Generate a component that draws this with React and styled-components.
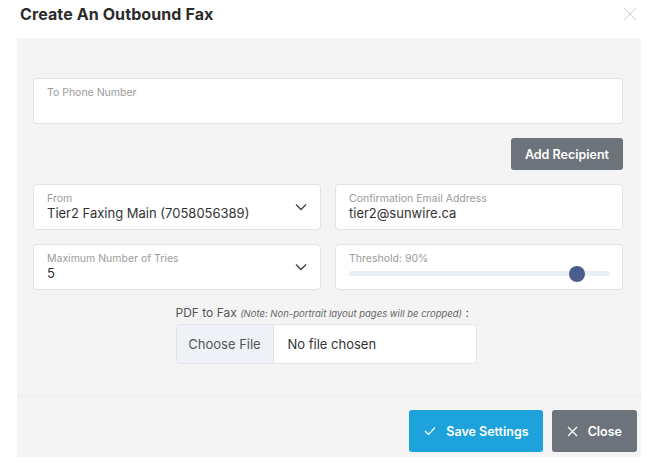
import React from "react";
import styled, { createGlobalStyle } from "styled-components";

const Global = createGlobalStyle`
  html, body { margin: 0; padding: 0; background: #fff; }
  body { font-family: Inter, "Noto Sans", sans-serif; color: #333; }
  * { box-sizing: border-box; }
`;

const Modal = styled.div`
  width: 661px;
  height: 463px;
  background: #fff;
  display: flex;
  flex-direction: column;
`;

const Header = styled.div`
  height: 38px;
  flex: none;
  display: flex;
  align-items: flex-start;
  justify-content: space-between;
  padding: 4px 24px 0 20px;
`;

const Title = styled.h1`
  margin: 0;
  font-size: 16px;
  font-weight: 700;
  color: #2b2b2b;
  line-height: 20px;
  letter-spacing: 0.1px;
`;

const CloseX = styled.button`
  border: 0;
  background: none;
  padding: 0;
  margin-top: 3px;
  width: 14px;
  height: 14px;
  display: flex;
`;

const Sheet = styled.div`
  margin: 0 20px 6px 17px;
  background: #f4f4f4;
  flex: 1;
  display: flex;
  flex-direction: column;
`;

const Body = styled.div`
  padding: 40px 18px 0 16px;
  height: 359px;
  flex: none;
  display: flex;
  flex-direction: column;
  border-bottom: 1px solid #ececec;
`;

const Box = styled.div`
  background: #fff;
  border: 1px solid #e3e3e3;
  border-radius: 4px;
  height: 46px;
  padding: 7px 14px 0 13px;
  position: relative;
  display: flex;
  flex-direction: column;
`;

const Label = styled.div`
  font-size: 10.5px;
  color: #9b9b9b;
  line-height: 13px;
`;

const Value = styled.div`
  font-size: 13px;
  color: #333;
  line-height: 17px;
`;

const ActionRow = styled.div`
  display: flex;
  justify-content: flex-end;
  margin: 14px 0;
`;

const GreyButton = styled.button`
  background: #6c737a;
  color: #fff;
  border: 0;
  border-radius: 3px;
  font-family: inherit;
  font-weight: 600;
  font-size: 12.5px;
  height: 32px;
  padding: 0 14px;
`;

const Grid = styled.div`
  display: grid;
  grid-template-columns: 1fr 1fr;
  column-gap: 14px;
  row-gap: 14px;
`;

const Chevron = styled.svg`
  position: absolute;
  right: 13px;
  top: 18px;
`;

const Track = styled.div`
  margin-top: 6px;
  height: 5px;
  border-radius: 3px;
  background: #eaeff5;
  position: relative;
  margin-right: -2px;
`;

const Thumb = styled.div`
  position: absolute;
  top: 50%;
  width: 16px;
  height: 16px;
  margin: -8px 0 0 -8px;
  border-radius: 50%;
  background: #4a5d8c;
`;

const FileSection = styled.div`
  display: flex;
  flex-direction: column;
  align-items: stretch;
  align-self: center;
  margin-top: 15px;
  margin-left: -4px;
`;

const FileLabel = styled.div`
  font-size: 12px;
  color: #555;
  line-height: 15px;
  margin-bottom: 3px;
  white-space: nowrap;
  em { font-size: 9.5px; color: #666; }
`;

const FileInput = styled.div`
  width: 301px;
  height: 40px;
  display: flex;
  border: 1px solid #e3e3e3;
  border-radius: 4px;
  overflow: hidden;
  background: #fff;
`;

const FileButton = styled.div`
  width: 97px;
  background: #eef2f7;
  border-right: 1px solid #e3e3e3;
  display: flex;
  align-items: center;
  justify-content: center;
  font-size: 13px;
  color: #555;
`;

const FileName = styled.div`
  display: flex;
  align-items: center;
  padding-left: 14px;
  font-size: 13px;
  color: #333;
`;

const Footer = styled.div`
  display: flex;
  justify-content: flex-end;
  gap: 9px;
  padding: 13px 4px 0 0;
`;

const FooterButton = styled.button`
  height: 42px;
  border: 0;
  border-radius: 3px;
  background: ${(p) => (p.$primary ? "#1ea2dc" : "#6c737a")};
  color: #fff;
  font-family: inherit;
  font-weight: 600;
  font-size: 12.5px;
  display: flex;
  align-items: center;
  gap: 10px;
  padding: ${(p) => (p.$primary ? "0 14px 0 15px" : "0 15px 0 15px")};
`;

const ChevronIcon = () => (
  <Chevron width="12" height="8" viewBox="0 0 12 8">
    <path d="M1 1.5 L6 6.5 L11 1.5" fill="none" stroke="#444" strokeWidth="1.4" />
  </Chevron>
);

export default function App() {
  return (
    <Modal>
      <Global />
      <Header>
        <Title>Create An Outbound Fax</Title>
        <CloseX aria-label="close">
          <svg width="14" height="14" viewBox="0 0 14 14">
            <path d="M1 1 L13 13 M13 1 L1 13" stroke="#cfcfcf" strokeWidth="1" />
          </svg>
        </CloseX>
      </Header>
      <Sheet>
        <Body>
          <Box>
            <Label>To Phone Number</Label>
          </Box>
          <ActionRow>
            <GreyButton>Add Recipient</GreyButton>
          </ActionRow>
          <Grid>
            <Box>
              <Label>From</Label>
              <Value>Tier2 Faxing Main (7058056389)</Value>
              <ChevronIcon />
            </Box>
            <Box>
              <Label>Confirmation Email Address</Label>
              <Value>tier2@sunwire.ca</Value>
            </Box>
            <Box>
              <Label>Maximum Number of Tries</Label>
              <Value>5</Value>
              <ChevronIcon />
            </Box>
            <Box>
              <Label>Threshold: 90%</Label>
              <Track>
                <Thumb style={{ left: `${0.875 * 100}%` }} />
              </Track>
            </Box>
          </Grid>
          <FileSection>
            <FileLabel>
              PDF to Fax <em>(Note: Non-portrait layout pages will be cropped)</em> :
            </FileLabel>
            <FileInput>
              <FileButton>Choose File</FileButton>
              <FileName>No file chosen</FileName>
            </FileInput>
          </FileSection>
        </Body>
        <Footer>
          <FooterButton $primary>
            <svg width="12" height="10" viewBox="0 0 12 10">
              <path d="M1 5 L4.5 8.5 L11 1.5" fill="none" stroke="#fff" strokeWidth="1.2" />
            </svg>
            Save Settings
          </FooterButton>
          <FooterButton>
            <svg width="11" height="11" viewBox="0 0 11 11">
              <path d="M1 1 L10 10 M10 1 L1 10" stroke="#fff" strokeWidth="1.2" />
            </svg>
            Close
          </FooterButton>
        </Footer>
      </Sheet>
    </Modal>
  );
}
